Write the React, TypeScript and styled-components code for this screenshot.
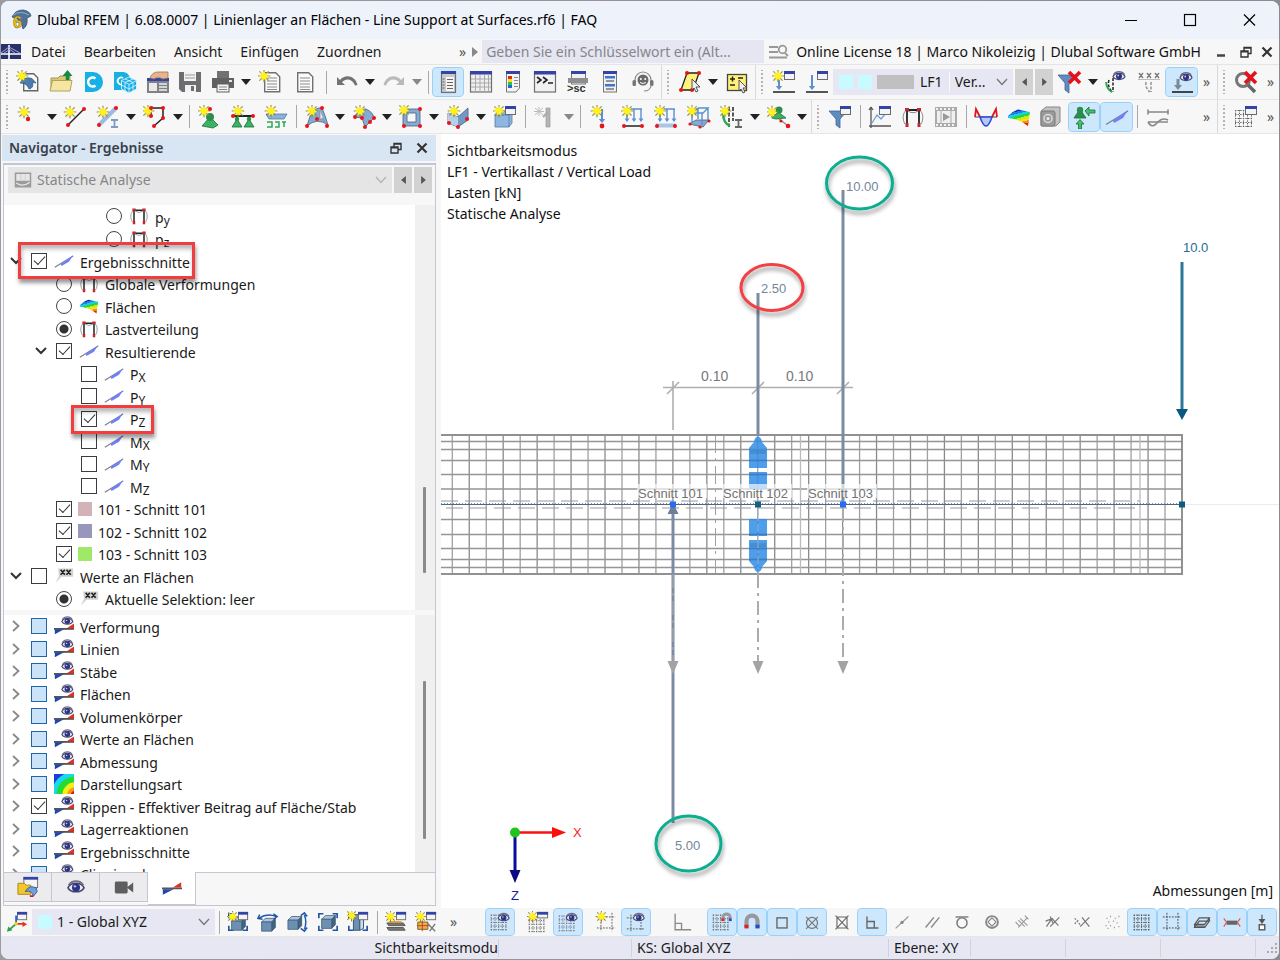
import React, { useId } from "react";
import styled, { createGlobalStyle, css } from "styled-components";

const GlobalStyle = createGlobalStyle`
  *, *::before, *::after { box-sizing: border-box; }
  html, body { margin: 0; padding: 0; }
  body {
    background: linear-gradient(90deg, #9b9ba0, #8a8a90);
    font-family: "Noto Sans", "Open Sans", sans-serif;
    font-size: 14px;
    line-height: 20px;
    color: #1a1a1a;
    overflow: hidden;
  }
  button, select, input { font: inherit; color: inherit; margin: 0; }
  button { border: 0; padding: 0; background: none; }
`;

/* ---------- window frame ---------- */

const Frame = styled.div`
  padding: 1px;
  height: 100vh;
  min-height: 700px;
`;
const Window = styled.div`
  display: flex;
  flex-direction: column;
  height: 100%;
  background: #f7f7f7;
  border-radius: 8px;
  overflow: hidden;
`;
const TitleBar = styled.header`
  display: flex;
  align-items: center;
  flex: none;
  height: 38px;
  padding: 0 13px 0 8px;
  background: #eef2fa;
`;
const Title = styled.h1`
  flex: 1;
  margin: 0 0 0 4px;
  font-size: 14px;
  font-weight: 400;
  white-space: nowrap;
  color: #000;
`;
const WindowButtons = styled.div`
  display: flex;
  gap: 35px;
`;
const PlainButton = styled.button`
  display: inline-flex;
  align-items: center;
  justify-content: center;
  flex: none;
`;

/* ---------- menu ---------- */

const MenuRow = styled.nav`
  display: flex;
  align-items: center;
  flex: none;
  height: 26px;
  padding-right: 6px;
  border-bottom: 1px solid #e4e4e4;
`;
const MenuItems = styled.ul`
  display: flex;
  gap: 18px;
  flex: 1;
  margin: 0;
  padding: 0 0 0 10px;
  list-style: none;
`;
const KeywordInput = styled.input`
  width: 282px;
  height: 23px;
  margin: 0 5px 0 3px;
  padding: 0 4px;
  border: 0;
  background: #e5e6f1;
  &::placeholder { color: #85858c; opacity: 1; }
`;
const License = styled.span`
  margin: 0 15px 0 7px;
  white-space: nowrap;
  color: #111;
`;
const DocButtons = styled.div`
  display: flex;
  gap: 4px;
`;

/* ---------- toolbars ---------- */

const Toolbar = styled.div<{ $h: number }>`
  display: flex;
  align-items: center;
  flex: none;
  height: ${(p) => p.$h}px;
  padding-left: 1px;
  border-bottom: 1px solid #e6e6e6;
`;
const Group = styled.div<{ $w: number }>`
  display: flex;
  align-items: center;
  flex: none;
  width: ${(p) => p.$w}px;
  & > button { flex: 1 1 0; width: auto; min-width: 0; }
`;
const Tool = styled.button<{ $on?: boolean; $small?: boolean }>`
  display: inline-flex;
  align-items: center;
  justify-content: center;
  flex: none;
  width: ${(p) => (p.$small ? 30 : 33)}px;
  height: ${(p) => (p.$small ? 28 : 30)}px;
  border: 1px solid transparent;
  border-radius: 4px;
  background-clip: padding-box;
  ${(p) => p.$on && css`
    background-color: #cde7fd;
    border-color: #99d1fb;
  `}
`;
const CaretButton = styled.button`
  display: inline-flex;
  align-items: center;
  justify-content: center;
  flex: none;
  width: 14px;
  height: 28px;
`;
const Separator = styled.span`
  flex: none;
  width: 8px;
  height: 23px;
  background: linear-gradient(#a8a8a8, #a8a8a8) center / 1px 100% no-repeat;
`;
const Edge = styled.span`
  flex: none;
  align-self: stretch;
  width: 4px;
  background: linear-gradient(#dadada, #dadada) center / 1px 100% no-repeat;
`;
const Grip = styled.span`
  flex: none;
  width: 10px;
  height: 24px;
  background: radial-gradient(circle, #b4b4b4 1px, transparent 1px) center / 4px 4px repeat-y;
`;
const Gap = styled.span<{ $w: number }>`
  flex: none;
  width: ${(p) => p.$w}px;
`;
const Stretch = styled.span`
  flex: 1;
`;
const More = styled.button`
  flex: none;
  width: 17px;
  line-height: 20px;
  color: #555;
`;
const Combo = styled.div<{ $w?: number; $muted?: boolean }>`
  position: relative;
  display: flex;
  align-items: center;
  gap: 5px;
  ${(p) => (p.$w ? `flex: none; width: ${p.$w}px;` : "flex: 1;")}
  min-width: 0;
  height: 26px;
  padding-left: 6px;
  background: ${(p) => (p.$muted ? "#e5e5e5" : "#e6e7f2")};
  color: ${(p) => (p.$muted ? "#85858a" : "#1a1a1a")};
`;
const ComboSelect = styled.select`
  flex: 1;
  min-width: 0;
  height: 100%;
  padding: 0;
  border: 0;
  background: transparent;
  appearance: none;
`;
const ComboArrow = styled.svg`
  position: absolute;
  right: 5px;
  top: 9px;
  pointer-events: none;
`;
const Swatch = styled.span<{ $c: string; $w?: number }>`
  flex: none;
  width: ${(p) => p.$w ?? 14}px;
  height: 14px;
  background: ${(p) => p.$c};
`;
const CaseName = styled.span`
  padding: 0 6px 0 1px;
  border-right: 1px solid #fafafa;
`;
const StepButton = styled.button`
  display: flex;
  align-items: center;
  justify-content: center;
  flex: none;
  width: 18px;
  height: 26px;
  margin-left: 2px;
  background: #d2d2d2;
`;

/* ---------- navigator dock ---------- */

const Main = styled.main`
  display: flex;
  flex: 1;
  min-height: 0;
`;
const Dock = styled.aside`
  display: flex;
  flex-direction: column;
  flex: none;
  width: 440px;
  padding: 1px 5px 2px 1px;
`;
const DockTitle = styled.div`
  display: flex;
  align-items: center;
  gap: 14px;
  flex: none;
  height: 26px;
  margin-bottom: 2px;
  padding: 0 8px 0 7px;
  background: #d8e5f2;
`;
const DockHeading = styled.h2`
  flex: 1;
  margin: 0;
  font-size: 14px;
  font-weight: 600;
  line-height: 20px;
  color: #3a3f4a;
`;
const Panel = styled.div`
  display: flex;
  flex-direction: column;
  flex: 1;
  min-height: 0;
  margin-left: 1px;
  border: 1px solid #c6c6d2;
  border-top-width: 2px;
`;
const AnalysisRow = styled.div`
  display: flex;
  flex: none;
  padding: 2px 3px 12px 4px;
`;
const TreeBox = styled.div<{ $grow?: boolean }>`
  display: flex;
  align-items: flex-start;
  ${(p) => (p.$grow ? "flex: 1; min-height: 0; overflow: hidden;" : "flex: none; margin-bottom: 5px;")}
  background: #fff;
`;
const TreeList = styled.ul<{ $rows: number; $h: number }>`
  display: grid;
  grid-template-rows: repeat(${(p) => p.$rows}, 1fr);
  flex: 1;
  height: ${(p) => p.$h}px;
  margin: 0;
  padding: 0;
  list-style: none;
`;
const ScrollTrack = styled.div<{ $top: number }>`
  align-self: stretch;
  flex: none;
  width: 20px;
  padding: ${(p) => p.$top}px 8px 0;
  background: #f0f0f0;
`;
const ScrollThumb = styled.div<{ $h: number }>`
  width: 3px;
  height: ${(p) => p.$h}px;
  border-radius: 1px;
  background: #8a8a8a;
`;
const Row = styled.li<{ $level: number }>`
  position: relative;
  display: flex;
  align-items: center;
  padding-left: ${(p) => 4 + p.$level * 25}px;
  white-space: nowrap;
`;
const Expander = styled.button`
  display: flex;
  justify-content: center;
  flex: none;
  width: 16px;
  margin-right: 7px;
`;
const ExpanderSpace = styled.span`
  flex: none;
  width: 23px;
`;
const Check = styled.input<{ $mixed?: boolean }>`
  appearance: none;
  flex: none;
  width: 16px;
  height: 16px;
  border: 1px solid ${(p) => (p.$mixed ? "#1e66a8" : "#3c3c3c")};
  background: ${(p) => (p.$mixed ? "#cbe3f8" : "#fff")};
  &:checked::before {
    content: "";
    display: block;
    width: 11px;
    height: 6px;
    margin: 2px 0 0 2px;
    border: solid #333;
    border-width: 0 0 1px 1px;
    transform: rotate(-47deg);
  }
`;
const Radio = styled.input`
  appearance: none;
  flex: none;
  width: 16px;
  height: 16px;
  border: 1px solid #444;
  border-radius: 50%;
  background: #fff;
  &:checked { background: radial-gradient(circle, #333 4px, #fff 5px); }
`;
const IconSlot = styled.span`
  display: flex;
  align-items: center;
  justify-content: center;
  flex: none;
  width: 22px;
  margin: 0 5px 0 6px;
`;
const SwatchSlot = styled(IconSlot)`
  width: 14px;
  margin: 0 6px 0 6px;
`;
const RowLabel = styled.label`
  padding-top: 3px;
  line-height: 18px;
`;
const Index = styled.sub`
  font-size: 12px;
  line-height: 1;
  vertical-align: -2px;
`;
const Highlight = styled.span<{ $x: number; $w: number; $wide?: boolean }>`
  position: absolute;
  z-index: 1;
  left: ${(p) => p.$x}px;
  top: ${(p) => (p.$wide ? -8 : -3)}px;
  bottom: ${(p) => (p.$wide ? -6 : -4)}px;
  width: ${(p) => p.$w}px;
  border: 3px solid #f23d3f;
  box-shadow: 1px 4px 4px rgba(0, 0, 0, 0.4), inset 1px 4px 4px rgba(0, 0, 0, 0.28);
  pointer-events: none;
`;
const Tabs = styled.div`
  display: flex;
  align-items: flex-start;
  flex: none;
  height: 33px;
  background: #f7f7f7;
`;
const Tab = styled.button<{ $active?: boolean }>`
  display: flex;
  align-items: center;
  justify-content: center;
  width: 48px;
  height: ${(p) => (p.$active ? 33 : 30)}px;
  border: 1px solid #c6c6d2;
  border-width: ${(p) => (p.$active ? "0 1px 1px 0" : "1px 1px 1px 0")};
  background: ${(p) => (p.$active ? "#fff" : "#ececee")};
`;
const TabRest = styled.span`
  flex: 1;
  border-top: 1px solid #c6c6d2;
`;

/* ---------- model view ---------- */

const View = styled.section`
  position: relative;
  flex: 1;
  min-width: 0;
  background: #fff;
`;
const Drawing = styled.svg`
  display: block;
  width: 100%;
  height: 100%;
`;
const ViewInfo = styled.div`
  position: absolute;
  left: 6px;
  top: 6px;
  line-height: 21px;
  color: #111;
`;
const ViewUnits = styled.div`
  position: absolute;
  right: 6px;
  bottom: 7px;
  color: #111;
`;

/* ---------- status ---------- */

const StatusBar = styled.footer`
  display: flex;
  align-items: center;
  flex: none;
  height: 22px;
  background: #e6e7f2;
`;
const StatusCell = styled.div<{ $w?: number; $end?: boolean }>`
  ${(p) => (p.$w ? `flex: none; width: ${p.$w}px;` : "flex: 1;")}
  height: 18px;
  padding-left: 5px;
  text-align: ${(p) => (p.$end ? "right" : "left")};
  line-height: 18px;
  border-right: 1px solid #d2d2da;
`;

/* ---------- icon building blocks ---------- */

const Star = ({ x = 6, y = 6 }: { x?: number; y?: number }) => (
  <g transform={`translate(${x} ${y}) scale(1.15)`}>
    <path d="M0-5.5V5.5M-5.5 0H5.5M-4-4L4 4M4-4L-4 4" stroke="#8d8a4c" strokeWidth="1" />
    <path d="M0-4.6L1.3-2 3.8-3 2.6-.6 4.6.6 2.2 1.5 1.8 4.2 0 2.7-2 4.2-2 1.5-4.6.4-2.6-.8-3.6-3.2-1.2-2.2Z" fill="#fff01e" />
  </g>
);
const Dot = ({ x, y, r = 2 }: { x: number; y: number; r?: number }) => <circle cx={x} cy={y} r={r} fill="#e8141c" />;
const Win = ({ x = 12, y = 1, w = 11, h = 9 }: { x?: number; y?: number; w?: number; h?: number }) => (
  <g>
    <rect x={x + 0.5} y={y + 0.5} width={w - 1} height={h - 1} fill="#f4f4f4" stroke="#6b6b6b" />
    <rect x={x} y={y} width={w} height="3" fill="#3443a8" />
  </g>
);
const Eye = ({ x = 16, y = 6, s = 1 }: { x?: number; y?: number; s?: number }) => (
  <g transform={`translate(${x} ${y}) scale(${s})`}>
    <path d="M-6 .6C-4-4 4-4 6 .6 4 4.6-4 4.6-6 .6Z" fill="#e8eaf6" stroke="#45456e" strokeWidth="1.2" />
    <path d="M-5.5-1.4C-3-5.4 3-5.4 5.5-1.4" fill="none" stroke="#6d6d86" strokeWidth="1.3" />
    <circle cy=".3" r="3" fill="#2b3480" />
    <circle cx="-.8" cy="-.5" r=".9" fill="#b9c4ff" />
  </g>
);
const BlueArrow = ({ x, y1, y2 }: { x: number; y1: number; y2: number }) => (
  <g>
    <path d={`M${x} ${y1}V${y2 - 2}`} stroke="#5a8fd0" strokeWidth="2" />
    <path d={`M${x - 3.2} ${y2 - 4}H${x + 3.2}L${x} ${y2}Z`} fill="#5a8fd0" />
  </g>
);
const LoadRow = () => (
  <g>
    <path d="M6 4H21" stroke="#5a8fd0" strokeWidth="1.3" />
    {[6, 13, 20].map((x) => (
      <g key={x}>
        <path d={`M${x} 4V16`} stroke="#5a8fd0" strokeWidth="1.4" />
        <path d={`M${x - 2.4} 13.500H${x + 2.4}L${x} 17Z`} fill="#5a8fd0" />
      </g>
    ))}
  </g>
);
const Sheet = ({ x = 4 }: { x?: number }) => (
  <g>
    <path d={`M${x + 0.7} 2.7h11l4 4v15h-15Z`} fill="#fafafa" stroke="#707070" strokeWidth="1.4" />
    <path d={`M${x + 3} 8h10M${x + 3} 11h10M${x + 3} 14h10M${x + 3} 17h10M${x + 3} 19.5h10`} stroke="#8b8b8b" />
  </g>
);
const DotGrid = ({ x = 2, y = 4, c = "#666" }: { x?: number; y?: number; c?: string }) => (
  <path
    d={[0, 4, 8, 12, 16].map((k) => `M${x} ${y + k + 0.5}h18M${x + k + 0.5} ${y}v18`).join("")}
    stroke={c}
    strokeWidth="1"
    strokeDasharray="1.4 1.2"
    fill="none"
  />
);
const Frame4 = ({ c = "#555" }: { c?: string }) => (
  <path d="M2 6.5h20M2 18.5h20M6.5 2v20M18.5 2v20" stroke={c} strokeDasharray="2 1.3" fill="none" />
);
const Cube = ({ x = 4, y = 6 }: { x?: number; y?: number }) => (
  <g transform={`translate(${x} ${y})`}>
    <path d="M0 4L4 0H15L11 4Z" fill="#a9c4de" stroke="#3b566f" strokeWidth=".8" />
    <path d="M11 4L15 0V10L11 14Z" fill="#3f6485" stroke="#34506d" strokeWidth=".8" />
    <path d="M0 4H11V14H0Z" fill="#6d90b2" stroke="#3b566f" strokeWidth=".8" />
  </g>
);
const Brackets = ({ c = "#1f55a8" }: { c?: string }) => (
  <path d="M2 8V3H7M17 3H22V8M22 16V21H17M7 21H2V16" fill="none" stroke={c} strokeWidth="1.8" />
);
const Portal = () => (
  <g>
    <path d="M6 20V5H18V20" fill="none" stroke="#222" strokeWidth="1.8" />
    <path d="M4 19C1.500 15 1.500 9 4.500 6M20 19C22.500 15 22.500 9 19.500 6M7 6Q12 9.500 17 6" fill="none" stroke="#888" />
    <path d="M4 3h4v3H4ZM16 3h4v3h-4ZM4.500 18h3v4h-3ZM16.500 18h3v4h-3Z" fill="#c8262c" />
  </g>
);
const Surface = () => {
  const id = useId();
  const bands = ["#0d2fae", "#1f7de8", "#18d0e6", "#2ad636", "#c8ea20", "#f8e21c", "#f48a1c", "#e2200e"];
  return (
    <g>
      <linearGradient id={id} x1="0.35" y1="0" x2="0.7" y2="1">
        {bands.flatMap((c, i) => [
          <stop key={`${c}a`} offset={i / 8} stopColor={c} />,
          <stop key={`${c}b`} offset={(i + 1) / 8} stopColor={c} />,
        ])}
      </linearGradient>
      <path d="M1 11Q6 6 11 4.500L23 7L21 21Q12 14 1 13Z" fill={`url(#${id})`} />
    </g>
  );
};
const Support = ({ x, y }: { x: number; y: number }) => (
  <g transform={`translate(${x} ${y})`}>
    <path d="M0 0L5 8H-5Z" fill="#3bb264" stroke="#17703a" strokeWidth=".8" />
    <circle r="2.200" fill="#2b8e4c" />
  </g>
);

const svgIcons = {
  newModel: (
    <>
      <path d="M7.700 3.700h10l4 4v13h-14Z" fill="#fafafa" stroke="#666" strokeWidth="1.400" />
      <path d="M4 13Q8 6 16 8.500L20 13L16.500 12.500Q18 18 13 19Q11 13 4 13Z" fill="#4b7cb0" stroke="#2c5580" strokeWidth=".7" />
      <Star />
    </>
  ),
  open: (
    <>
      <path d="M2 20V8H9L11 6H21V20Z" fill="#d9c678" stroke="#a8964e" />
      <path d="M1 21L3.500 10.500H23L21 21Z" fill="#f4e7a2" stroke="#b3a25c" />
      <path d="M18.500 10V5" stroke="#178a42" strokeWidth="3.400" />
      <path d="M18.500 0L23.500 6H13.500Z" fill="#178a42" />
    </>
  ),
  dlubal: (
    <>
      <path d="M4 2h8a10 10 0 0 1 0 20H4Z" fill="#16b0e4" />
      <path d="M14.500 8.500a4.500 4.500 0 1 0 0 7" fill="none" stroke="#fff" strokeWidth="2.600" />
    </>
  ),
  cloudCube: (
    <>
      <path d="M1 2h9a7 7 0 0 1 7 6L9 12v8H1Z" fill="#16b0e4" />
      <path d="M10 8a3.500 3.500 0 1 0 0 6" fill="none" stroke="#fff" strokeWidth="1.800" />
      <path d="M16 7L23.500 10.500V19L16 23L8.500 19V10.500Z" fill="#16b0e4" stroke="#e8f8ff" strokeWidth=".8" />
      <path d="M8.500 10.500L16 14.500L23.500 10.500M16 14.500V23M8.500 15L16 19L23.500 15M12 9L20 12.500V21M20 9L12 12.500V21" stroke="#e8f8ff" strokeWidth=".8" fill="none" />
    </>
  ),
  manager: (
    <>
      <rect x="1" y="8" width="22" height="15" fill="#7f8184" />
      <rect x="1" y="8" width="22" height="3" fill="#3443a8" />
      <rect x="3" y="13" width="8" height="8" fill="#e9e9e9" />
      <path d="M13 14h8M13 17h8M13 20h8" stroke="#f0f0f0" strokeWidth="1.400" />
      <path d="M4 8Q6 2 12 2H22V8L17 9L12 7L8 9Z" fill="#e7b48c" stroke="#9d7251" strokeWidth=".8" />
    </>
  ),
  save: (
    <>
      <path d="M1 2H23V22H4L1 19Z" fill="#6c6e70" />
      <rect x="6" y="2" width="12" height="9" fill="#f2f2f2" />
      <path d="M7 5h10M7 8h10" stroke="#999" />
      <rect x="7" y="15" width="11" height="7" fill="#f2f2f2" />
      <rect x="13" y="16" width="3" height="5" fill="#6c6e70" />
    </>
  ),
  print: (
    <>
      <rect x="6" y="1" width="12" height="7" fill="#6f7173" />
      <rect x="1" y="8" width="22" height="10" fill="#5f6163" />
      <rect x="6" y="14" width="12" height="8" fill="#f2f2f2" stroke="#5f6163" />
      <path d="M8 17h8M8 19.500h8" stroke="#888" />
      <rect x="18" y="10" width="3" height="2" fill="#e6e6e6" />
    </>
  ),
  report: (<><Sheet x={6} /><Star /></>),
  sheet: <Sheet />,
  undo: <path d="M2 7V15H10L7 12.200C11 8 17 8.500 20 15.500L22.500 15C20 5 10 4 5 10Z" fill="#717375" />,
  redo: <path d="M22 7V15H14L17 12.200C13 8 7 8.500 4 15.500L1.500 15C4 5 14 4 19 10Z" fill="#b9babb" />,
  navigator: (
    <>
      <rect x="5.500" y="2" width="14" height="20.500" fill="#c9c9c9" stroke="#6e7072" strokeWidth="1.200" />
      <rect x="5" y="1" width="15" height="3" fill="#3443a8" />
      <path d="M10 7h8v14h-8Z" fill="#f4f4f4" />
      <path d="M6.500 9h2M6.500 12h2M6.500 15h2M6.500 18h2" stroke="#666" />
      <path d="M11 9.500h6M11 12.500h6M11 15.500h6M11 18.500h6" stroke="#666" />
    </>
  ),
  table: (
    <>
      <rect x="1.500" y="2" width="21" height="20" fill="#efefef" stroke="#6f6f6f" strokeWidth="1.200" />
      <path d="M2 9h20M2 13h20M2 17h20M6.500 5v17M11 5v17M15.500 5v17M19.500 5v17" stroke="#a9a9a9" />
      <rect x="1" y="1" width="22" height="3.500" fill="#3443a8" />
    </>
  ),
  colors: (
    <>
      <path d="M5.500 2H18.500V18L15 22H5.500Z" fill="#f3f3f3" stroke="#777" />
      <rect x="5" y="1" width="14" height="3" fill="#3443a8" />
      <rect x="7" y="6" width="4" height="3" fill="#e8251c" />
      <rect x="7" y="9" width="4" height="3" fill="#f4e21c" />
      <rect x="7" y="12" width="4" height="3" fill="#2ec63c" />
      <rect x="7" y="15" width="4" height="3" fill="#2166e0" />
      <path d="M13 7.500h4M13 10.500h4M13 13.500h4M13 16.500h4" stroke="#888" />
    </>
  ),
  console: (
    <>
      <rect x="1.500" y="2" width="21" height="20" fill="#f1f1f1" stroke="#6f6f6f" strokeWidth="1.200" />
      <rect x="1" y="1" width="22" height="3.500" fill="#3443a8" />
      <path d="M4 7l4 3-4 3M10 7l4 3-4 3M15 13h5" fill="none" stroke="#222" strokeWidth="1.600" />
    </>
  ),
  script: (
    <>
      <rect x="5.500" y="2" width="14" height="12" fill="#f1f1f1" stroke="#777" />
      <rect x="5" y="1" width="15" height="3" fill="#3443a8" />
      <rect x="2" y="8" width="20" height="5" fill="#8b8d8f" />
      <text x="1" y="22" fontSize="11" fontWeight="700" fontFamily="Liberation Sans, sans-serif" fill="#333">&gt;sc</text>
    </>
  ),
  props: (
    <>
      <rect x="5.500" y="2" width="13" height="20" fill="#eee" stroke="#777" />
      <rect x="5" y="1" width="14" height="3" fill="#3443a8" />
      <rect x="7" y="6" width="10" height="2.500" fill="#3c74d0" />
      <rect x="7" y="14" width="10" height="2.500" fill="#3c74d0" />
      <path d="M8 11h8M8 19h8" stroke="#777" strokeWidth="1.400" />
    </>
  ),
  headset: (
    <>
      <circle cx="12" cy="10" r="5.500" fill="#6a6a6a" />
      <path d="M4 12V10a8 8 0 0 1 16 0v2" fill="none" stroke="#8a8a8a" strokeWidth="1.200" />
      <rect x="1.500" y="10" width="3.500" height="6" rx="1.500" fill="#777" />
      <rect x="19" y="10" width="3.500" height="6" rx="1.500" fill="#777" />
      <path d="M20 16Q19 21 13 21" stroke="#888" fill="none" strokeWidth="1.200" />
      <circle cx="9.800" cy="9" r="1" fill="#fff" /><circle cx="14.200" cy="9" r="1" fill="#fff" />
      <path d="M9 12.500Q12 14.500 15 12.500" stroke="#fff" fill="none" />
    </>
  ),
  selectArea: (
    <>
      <path d="M3 20L9 3H21L15 20Z" fill="#fff17a" stroke="#222" strokeWidth="1.300" />
      <Dot x={3} y={20} /><Dot x={9} y={3} /><Dot x={21} y={3} /><Dot x={14} y={20} />
      <path d="M14 9L22 17H18L20 21L18 22L16 18L14 20Z" fill="#eee" stroke="#444" strokeWidth=".9" />
    </>
  ),
  selectSpecial: (
    <>
      <rect x="2.500" y="4.500" width="19" height="16" fill="#fff17a" stroke="#444" strokeWidth="1.300" />
      <path d="M5 9h5M7.500 6.500v5M5 15h5M13 8h5" stroke="#222" strokeWidth="1.500" />
      <path d="M14 10L22 18H18L20 22L18 23L16 19L14 21Z" fill="#eee" stroke="#444" strokeWidth=".9" />
    </>
  ),
  newLoadCase: (<><path d="M1 22h22" stroke="#555" strokeWidth="2" /><BlueArrow x={7} y1={6} y2={20} /><Win /><Star /></>),
  loadCase: (<><path d="M1 22h22" stroke="#555" strokeWidth="2" /><BlueArrow x={7} y1={5} y2={20} /><Win /></>),
  filterOff: (
    <>
      <path d="M0 5H18L11 13V23L7 20V13Z" fill="#5f8cc0" stroke="#3d6798" strokeWidth=".8" />
      <path d="M11 2L22 13M22 2L11 13" stroke="#e3131b" strokeWidth="3.600" />
    </>
  ),
  supportEye: (
    <>
      <path d="M5 10Q3 16 8 22M9 8V22" fill="none" stroke="#222" strokeWidth="1.500" strokeDasharray="3 1.500" />
      <path d="M2 12Q3 20 8 22" fill="none" stroke="#2ea855" strokeWidth="2" />
      <Eye x={15} y={6} />
    </>
  ),
  values: (
    <>
      <path d="M2 3l4 5M6 3L2 8M10 3l4 5M14 3l-4 5M18 3l4 5M22 3l-4 5" stroke="#777" strokeWidth="1.300" />
      <path d="M1 9.500h22" stroke="#bbb" />
      <path d="M9 12Q8 18 13 22M14 12V22" stroke="#999" strokeWidth="1.600" fill="none" strokeDasharray="3 1.500" />
    </>
  ),
  loadEye: (<><path d="M2 22h21" stroke="#444" strokeWidth="2" /><path d="M8 9V18" stroke="#7b8a9a" strokeWidth="3" /><path d="M4 15H12L8 20Z" fill="#7b8a9a" /><Eye x={16} y={7} /></>),
  zoomOff: (
    <>
      <circle cx="9" cy="10" r="6.500" fill="none" stroke="#777" strokeWidth="3" />
      <path d="M14 15L21 22" stroke="#666" strokeWidth="3.500" />
      <path d="M11 2L22 13M22 2L11 13" stroke="#e3131b" strokeWidth="3.600" />
    </>
  ),
  node: (<><Star x={7} y={7} /><Dot x={11} y={14} r={2.200} /></>),
  line: (<><path d="M5 20L21 4" stroke="#222" strokeWidth="1.400" /><Dot x={5} y={20} /><Dot x={21} y={4} /><Star x={7} y={7} /></>),
  member: (
    <>
      <path d="M3 20L20 3" stroke="#9dbbe0" strokeWidth="4" />
      <Dot x={3} y={20} /><Dot x={20} y={3} /><Star x={7} y={7} />
      <path d="M15 15h7M15 22h7M18.500 15v7" stroke="#7d9cc4" strokeWidth="1.800" />
    </>
  ),
  polyline: (<><path d="M8 11V3H20V13L11 21" fill="none" stroke="#222" strokeWidth="1.500" /><Star x={5} y={6} /><Dot x={8} y={11} /><Dot x={8} y={3} /><Dot x={20} y={3} /><Dot x={20} y={13} /><Dot x={11} y={21} /></>),
  nodeSupport: (<><path d="M12 12L20 20L15 23L4 21Z" fill="#3bb264" stroke="#17703a" strokeWidth=".8" /><circle cx="12" cy="12" r="4" fill="#2b8e4c" /><Star x={6} y={6} /><Dot x={12} y={4} /></>),
  lineSupport: (<><path d="M1 11H22" stroke="#222" strokeWidth="1.800" /><Support x={6} y={14} /><Support x={18} y={14} /><Star x={7} y={6} /><Dot x={2} y={11} /><Dot x={22} y={11} /></>),
  surfaceSupport: (<><path d="M2 9H23L20 14H5Z" fill="#8bb2dc" stroke="#55789e" strokeWidth=".8" /><path d="M3 17h5v5H3M11 17h4v5h-4M18 17h4M20 17v5" stroke="#2ea855" strokeWidth="1.500" fill="none" /><Star x={7} y={6} /></>),
  surface: (<><path d="M2 21Q6 6 9 5Q14 2 17 3Q20 10 23 20Q12 12 2 21Z" fill="#86aad2" stroke="#44617f" strokeWidth=".8" /><Star x={7} y={6} /><Dot x={2} y={21} /><Dot x={17} y={3} /><Dot x={12} y={14} /><Dot x={22} y={21} /><path d="M15 6v9l2.500-2 2 4" fill="#eee" stroke="#888" strokeWidth=".8" /></>),
  dome: (<><path d="M2 12Q8 3 14 4Q21 7 22 13L13 22L10 13Z" fill="#86aad2" stroke="#44617f" strokeWidth=".8" /><Star x={8} y={6} /><Dot x={3} y={12} /><Dot x={10} y={13} /><Dot x={22} y={13} /><Dot x={13} y={22} /><Dot x={18} y={17} /></>),
  opening: (<><path d="M4 4H21V21H4ZM8 8V17H17V8Z" fill="#86aad2" stroke="#44617f" strokeWidth=".8" fillRule="evenodd" /><Star x={5} y={5} /><Dot x={5} y={21} /><Dot x={21} y={4} /><Dot x={21} y={21} /></>),
  solid: (<><path d="M2 8L12 12L22 3V15L12 22L2 18Z" fill="#6f9bcb" stroke="#44617f" strokeWidth=".8" /><path d="M2 8L12 12V22L2 18Z" fill="#b7d0ea" /><Star x={8} y={6} /><Dot x={3} y={18} /><Dot x={12} y={22} /><Dot x={21} y={14} /></>),
  block: (<><path d="M2 10L5 6H19V18L16 22H2Z" fill="#8db6e2" stroke="#55789e" strokeWidth=".8" /><path d="M2 10H16V22M16 10L19 6" stroke="#55789e" strokeWidth=".8" fill="none" /><Win x={12} y={1} /><Star x={6} y={6} /></>),
  grayMember: (<><path d="M5 2v9M0 6.500h10M1 3l8 7M9 3l-8 7" stroke="#bbb" /><path d="M12 3H16V22H12Z" fill="#b5b5b5" stroke="#999" strokeWidth=".7" /><path d="M9 12L14 7" stroke="#aaa" strokeWidth="2" /></>),
  nodalLoad: (<><BlueArrow x={14} y1={4} y2={18} /><Dot x={14} y={21} r={2.400} /><Star x={9} y={6} /></>),
  memberLoad: (<><LoadRow /><path d="M2 21H22" stroke="#222" strokeWidth="1.500" /><Dot x={3} y={21} /><Dot x={21} y={21} /><Star x={6} y={6} /></>),
  lineLoad: (<><LoadRow /><path d="M2 20.500H22" stroke="#a8c4e6" strokeWidth="4" /><Dot x={3} y={21} /><Dot x={21} y={21} /><Star x={6} y={6} /></>),
  areaLoad: (<><path d="M2 19L9 15H22L16 22Z" fill="#86aad2" stroke="#44617f" strokeWidth=".8" /><path d="M5 6L12 3H21L16 8H5M5 6V18M15 8V20M21 3V16M11 4V14" fill="none" stroke="#5a8fd0" strokeWidth="1.400" /><Dot x={3} y={19} r={1.600} /><Dot x={22} y={16} r={1.600} /><Dot x={13} y={22} r={1.600} /><Star x={5} y={6} /></>),
  imperfection: (<><path d="M9 2V22M13 2V16" stroke="#222" strokeWidth="1.500" strokeDasharray="4 1.500" /><path d="M3 8Q3 18 10 21" stroke="#2ea855" strokeWidth="2.400" fill="none" /><path d="M15 15h7M15 22h7M18.500 15v7" stroke="#666" strokeWidth="1.800" /><Star x={5} y={6} /></>),
  release: (<><path d="M11 7L19 13L9 14L5 13Z" fill="#3bb264" stroke="#17703a" strokeWidth=".8" /><circle cx="12" cy="5" r="3.500" fill="#2b8e4c" /><path d="M12 14L20 20" stroke="#888" strokeWidth="1.200" /><Dot x={14} y={16} r={1.600} /><Dot x={21} y={21} r={2.300} /><Star x={5} y={7} /></>),
  filterWin: (<><path d="M1 6H19L12 14V23L8 20V14Z" fill="#5f8cc0" stroke="#3d6798" strokeWidth=".8" /><Win x={12} y={1} /></>),
  diagram: (<><path d="M3 2V23M1 21H23M3 2l-2 3M3 2l2 3" stroke="#555" strokeWidth="1.300" fill="none" /><path d="M4 18L9 10L13 14L18 8" fill="none" stroke="#6aa0dc" strokeWidth="1.300" /><Win x={11} y={1} w={12} h={9} /></>),
  portal: <Portal />,
  film: (<><path d="M1 2H23V22H1Z" fill="#aaa" /><path d="M3 6H21V18H3Z" fill="#efefef" /><path d="M2 4h20M2 20h20" stroke="#f3f3f3" strokeWidth="1.800" strokeDasharray="2 2" /><path d="M9 8L16 12L9 16Z" fill="#999" /><path d="M7 6v12M17 6v12" stroke="#aaa" /></>),
  results: (<><path d="M1 12H23" stroke="#444" /><path d="M1 12L2 4L6 12M18 12L22 4L23 12" fill="none" stroke="#e3131b" strokeWidth="1.800" /><path d="M6 12Q12 30 18 12Z" fill="#b9c5f6" stroke="#2b46d8" strokeWidth="1.500" /></>),
  surfaceRes: <Surface />,
  dice: (<><path d="M2 6L7 2H21V17L17 21H2Z" fill="#c2c2c2" stroke="#888" /><rect x="2" y="6" width="14" height="15" rx="2" fill="#9a9a9a" stroke="#7a7a7a" /><circle cx="9" cy="13.500" r="4" fill="none" stroke="#ddd" strokeWidth="1.500" /><circle cx="9" cy="13.500" r="1.500" fill="#eee" /></>),
  reactions: (<><path d="M8 4L14 13H2Z" fill="#2b8e4c" stroke="#17703a" strokeWidth=".8" /><circle cx="8" cy="5" r="3.200" fill="#2b8e4c" /><path d="M13 6L17 2V5H23V8H17V11Z" fill="#44c06c" stroke="#17703a" strokeWidth=".8" /><path d="M8 14.500L12 19H9.500V24H6.500V19H4Z" fill="#44c06c" stroke="#17703a" strokeWidth=".8" /></>),
  section: (<><path d="M1 19.500L23 6" stroke="#7c8090" strokeWidth="1.400" /><path d="M8 15.500L23 5L18 13L9 18Z" fill="#6f80f8" /></>),
  smooth: (<><path d="M2 7H22M2 4.500v5M22 4.500v5M2 17H22" stroke="#888" strokeWidth="1.600" fill="#888" /><path d="M2 17Q6 24 11 18T22 15" fill="none" stroke="#888" strokeWidth="1.600" /></>),
  gridTable: (<><DotGrid x={1} y={5} /><Win x={11} y={1} w={12} h={9} /></>),
  ucs: (<><path d="M11 14V5" stroke="#2a66d8" strokeWidth="2" /><path d="M11 14L4 20" stroke="#2aa04a" strokeWidth="2" /><path d="M11 14H20" stroke="#e3331b" strokeWidth="2" /><path d="M1 22.500l1.500-5.500 4.500 4Z" fill="#2aa04a" /><path d="M23 14.500l-5-3v6Z" fill="#e3331b" /><circle cx="11" cy="14" r="2" fill="#f2d21c" /><Win x={12} y={1} /></>),
  cubeNew: (<><Brackets /><Cube x={5} y={7} /><Win x={12} y={1} /><Star /></>),
  cubeTop: (<><Cube x={5} y={8} /><path d="M2 8Q11 2 21 6M3 4l-2 4 5 1M18 3l4 3-4 3" stroke="#1f55a8" strokeWidth="1.600" fill="none" /></>),
  cubeSide: (<><Cube x={1} y={6} /><path d="M19 4Q22 12 19 20M15 5l4-3 3 4M15 19l4 3 3-4" stroke="#1f55a8" strokeWidth="1.600" fill="none" /></>),
  cubeFrame: (<><Brackets /><Cube x={5} y={5} /></>),
  cubeCut: (<><Brackets /><path d="M7 4H14V21H7Z" fill="#6d90b2" stroke="#34506d" /><path d="M14 8l4-3v14l-4 2Z" fill="#c8dcf0" stroke="#34506d" /><Win x={12} y={1} /><Star x={5} y={5} /></>),
  layer: (<><path d="M2 13H20L22 16H4ZM2 18H20L22 21H4Z" fill="#777" stroke="#555" /><path d="M4 12h14" stroke="#e09a2a" strokeWidth="2" /><Win x={12} y={1} /><Star /></>),
  layer2: (<><path d="M3 12H14V20H3Z" fill="#e9b04a" stroke="#7a5c1c" /><path d="M8 10v12M2 16h14" stroke="#c03a2a" /><path d="M14 14L22 22M22 14l-6 8" stroke="#777" strokeWidth="1.500" /><Win x={12} y={1} /><Star /></>),
  gridEye: (<><DotGrid x={2} y={4} /><Eye x={16} y={7} /></>),
  gridNew: (<><DotGrid x={2} y={6} /><Win x={11} y={1} w={12} h={7} /><Star x={6} y={6} /></>),
  gridEye2: (<><DotGrid x={2} y={5} c="#778" /><Eye x={16} y={7} /></>),
  guideNew: (<><Frame4 /><Star x={7} y={6} /></>),
  guideEye: (<><path d="M2 7.500h8M2 19.500h19M6.500 4v18M17.500 12v10" stroke="#555" strokeDasharray="2 1.300" fill="none" /><Eye x={15} y={7} /></>),
  angle: <path d="M4.500 3V20.500H22M4.500 13.500H11.500V20.500" fill="none" stroke="#8a8a8a" strokeWidth="1.500" />,
  gridMagnet: (<><DotGrid x={2} y={4} /><path d="M13 11V7a4 4 0 0 1 8 0v4" fill="none" stroke="#98989e" strokeWidth="3" /><path d="M11.500 8h3v3h-3Z" fill="#e8251c" /><path d="M19.500 8h3v3h-3Z" fill="#2a50c8" /></>),
  magnet: (<><path d="M6 17V11a6 6 0 0 1 12 0v6" fill="none" stroke="#97979f" strokeWidth="4.500" /><path d="M3.700 15h4.600v4H3.700Z" fill="#d8281c" /><path d="M15.700 15h4.600v4h-4.600Z" fill="#2350c0" /></>),
  snapSquare: <rect x="6.500" y="7.500" width="11" height="11" fill="none" stroke="#666" strokeWidth="1.500" />,
  snapCenter: (<><circle cx="12" cy="13" r="6" fill="none" stroke="#777" strokeWidth="1.300" /><path d="M5.500 6.500L18.500 19.500M18.500 6.500L5.500 19.500" stroke="#777" strokeWidth="1.200" /></>),
  snapCross: <path d="M6.500 6.500H17.500V18.500H6.500ZM5 5L19 20M19 5L5 20" fill="none" stroke="#666" strokeWidth="1.200" />,
  snapPerp: <path d="M6.500 6V18.500H19M6.500 11.500H14.500V18.500" fill="none" stroke="#666" strokeWidth="1.500" />,
  snapNear: (<><path d="M5 19L19 6" stroke="#999" strokeWidth="1.300" /><circle cx="12" cy="12.500" r="1.800" fill="#888" /></>),
  snapParallel: <path d="M5 18L14 7M11 18L20 7" stroke="#888" strokeWidth="1.500" />,
  snapTangent: (<><path d="M5 6.500H19" stroke="#777" strokeWidth="1.500" /><circle cx="12" cy="13" r="5.500" fill="none" stroke="#777" strokeWidth="1.600" /></>),
  snapQuad: (<><circle cx="12" cy="12" r="6.500" fill="none" stroke="#888" strokeWidth="2" /><path d="M12 7.500L16.500 12L12 16.500L7.500 12Z" fill="none" stroke="#888" strokeWidth="1.200" /></>),
  snapA: <path d="M8 18L18 7M10 8L18 16M8 10L15 17M5 12l5 5M15 5l4 4" stroke="#999" strokeWidth="1.200" fill="none" />,
  snapB: <path d="M6 17L12 8M10 17L20 7M12 8L19 16M5 11L13 8M10 6l3 7" stroke="#777" strokeWidth="1.300" fill="none" />,
  snapC: (<><path d="M10 17L20 7M12 7L20 17" stroke="#777" strokeWidth="1.300" /><path d="M4 8L10 15M4 14L9 9" stroke="#777" strokeWidth="1.300" strokeDasharray="2 1.500" /></>),
  snapD: <path d="M6 8h1M10 6h1M15 8h1M19 6h1M8 12h1M13 11h1M17 13h1M5 16h1M10 16h1M14 18h1M19 17h1M7 19h1" stroke="#888" strokeWidth="1.500" />,
  tblGrid: <DotGrid x={3} y={4} c="#444" />,
  tblFrame: <Frame4 c="#444" />,
  layers: <path d="M4 18H15L20 11H9ZM4 14.500H15L20 7.500H9ZM4 14.500v3.500M20 7.500v3.500M6 16.500h9" fill="none" stroke="#555" strokeWidth="1.300" />,
  beamEnds: (<><rect x="6" y="10.500" width="12" height="4.500" fill="#666" /><path d="M3 8l3 4.500L3 17M21 8l-3 4.500 3 4.500" fill="none" stroke="#e3535b" strokeWidth="1.200" /></>),
  nodeDown: (<><path d="M12 4V12M9.500 9.500L12 13L14.500 9.500Z" stroke="#555" fill="#555" strokeWidth="1.300" /><rect x="9" y="15" width="6" height="5.500" fill="#fff" stroke="#555" strokeWidth="1.500" /></>),
  xx: (<><path d="M5 3H23V13H9L2 20L6 12Z" fill="#d2d2d2" /><path d="M8 4.500l5 6M13 4.500L8 10.500M15 4.500l5 6M20 4.500l-5 6" stroke="#222" strokeWidth="2" /></>),
  bar: (<><path d="M0 12.500H24" stroke="#555" strokeWidth="2" /><path d="M1 13.500H14L1 20Z" fill="#2446a8" /><path d="M13 11.500L23 5V11.500Z" fill="#d63424" /></>),
  barEye: (<><path d="M0 15.500H24" stroke="#444" strokeWidth="2" /><path d="M1 16H12L1 22Z" fill="#2446a8" /><path d="M15 15L24 9V15Z" fill="#d63424" /><Eye x={16} y={6} s={1.100} /></>),
  rainbow: (<><rect width="24" height="24" fill="#1d3be0" /><circle cx="25" cy="25" r="28" fill="#18d8ee" /><circle cx="25" cy="25" r="22" fill="#24dc30" /><circle cx="25" cy="25" r="15" fill="#f4ee1c" /><circle cx="25" cy="25" r="9" fill="#f49a1c" /><circle cx="25" cy="25" r="5" fill="#d82010" /></>),
  dataNav: (<><Win x={7} y={1} w={16} h={12} /><path d="M1 8H8L10 10H15V20H1Z" fill="#f4c62a" stroke="#a8821a" /><path d="M9 17Q13 9 21 13L22 17L18 22Q16 15 9 17Z" fill="#6fa0d8" stroke="#3a5f8c" /><path d="M14 21h4v2h-4Z" fill="#e3131b" /></>),
  eye: <Eye x={12} y={12} s={1.600} />,
  camera: (<><rect x="2" y="6" width="14" height="13" rx="1.500" fill="#5e5e60" /><path d="M15 12.500L22 7V18Z" fill="#5e5e60" /></>),
  analysis: (<><rect x="1" y="2" width="22" height="20" fill="#9b9b9b" /><path d="M3 4H21V13H3Z" fill="#e6e6e6" /><path d="M3 16Q12 22 21 15" stroke="#e6e6e6" strokeWidth="1.800" fill="none" /><path d="M9 4v9M15 4v9" stroke="#ccc" /></>),
};
type IconName = keyof typeof svgIcons;

const Icon = ({ name, size = 24 }: { name: IconName; size?: number }) => (
  <svg width={size} height={size} viewBox="0 0 24 24" fill="none" aria-hidden="true">
    {svgIcons[name]}
  </svg>
);

const Caret = ({ muted }: { muted?: boolean }) => (
  <CaretButton type="button" aria-label="Auswahl öffnen">
    <svg width="10" height="6" viewBox="0 0 10 6"><path d="M0 0H10L5 6Z" fill={muted ? "#888" : "#222"} /></svg>
  </CaretButton>
);
const Tools = ({ names, w, on = [], small }: { names: IconName[]; w: number; on?: IconName[]; small?: boolean }) => (
  <Group $w={w}>
    {names.map((n) => (
      <Tool key={n} type="button" aria-label={n} $on={on.includes(n)} $small={small}>
        <Icon name={n} size={small ? 22 : 24} />
      </Tool>
    ))}
  </Group>
);
const One = ({ name, on, small }: { name: IconName; on?: boolean; small?: boolean }) => (
  <Tool type="button" aria-label={name} $on={on} $small={small}>
    <Icon name={name} size={small ? 22 : 24} />
  </Tool>
);
const Arrow = ({ muted }: { muted?: boolean }) => (
  <ComboArrow width="12" height="8" viewBox="0 0 12 8">
    <path d="M1 1L6 6.500L11 1" fill="none" stroke={muted ? "#b4b4b8" : "#777"} strokeWidth="1.300" />
  </ComboArrow>
);
const Steps = () => (
  <>
    <StepButton type="button" aria-label="Zurück"><svg width="5" height="8" viewBox="0 0 6 10"><path d="M6 0V10L0 5Z" fill="#555" /></svg></StepButton>
    <StepButton type="button" aria-label="Weiter"><svg width="5" height="8" viewBox="0 0 6 10"><path d="M0 0V10L6 5Z" fill="#555" /></svg></StepButton>
  </>
);
const RestoreGlyph = () => (
  <svg width="12" height="12" viewBox="0 0 12 12" fill="none" stroke="#333" strokeWidth="1.400">
    <path d="M1 5H8V11H1ZM1 5.700H8M4 5V1.500H11V7.500H8M4 2H11" />
  </svg>
);
const CloseGlyph = () => (
  <svg width="12" height="12" viewBox="0 0 12 12"><path d="M1.500 1.500L10.500 10.500M10.500 1.500L1.500 10.500" stroke="#333" strokeWidth="2.200" /></svg>
);

/* ---------- tree data ---------- */

type Node = {
  level: number;
  kind: "check" | "radio";
  on?: boolean;
  mixed?: boolean;
  expand?: "open" | "closed";
  icon?: IconName;
  color?: string;
  text: string;
  sub?: string;
  mark?: { x: number; w: number; wide?: boolean };
  group?: string;
};

const resultNodes: Node[] = [
  { level: 3, kind: "radio", icon: "portal", text: "p", sub: "y", group: "p" },
  { level: 3, kind: "radio", icon: "portal", text: "p", sub: "z", group: "p" },
  { level: 0, kind: "check", on: true, expand: "open", icon: "section", text: "Ergebnisschnitte", mark: { x: 14, w: 177, wide: true } },
  { level: 1, kind: "radio", icon: "portal", text: "Globale Verformungen", group: "schnitt" },
  { level: 1, kind: "radio", icon: "surfaceRes", text: "Flächen", group: "schnitt" },
  { level: 1, kind: "radio", on: true, icon: "portal", text: "Lastverteilung", group: "schnitt" },
  { level: 1, kind: "check", on: true, expand: "open", icon: "section", text: "Resultierende" },
  { level: 2, kind: "check", icon: "section", text: "P", sub: "X" },
  { level: 2, kind: "check", icon: "section", text: "P", sub: "Y" },
  { level: 2, kind: "check", on: true, icon: "section", text: "P", sub: "Z", mark: { x: 67, w: 83 } },
  { level: 2, kind: "check", icon: "section", text: "M", sub: "X" },
  { level: 2, kind: "check", icon: "section", text: "M", sub: "Y" },
  { level: 2, kind: "check", icon: "section", text: "M", sub: "Z" },
  { level: 1, kind: "check", on: true, color: "#d2b4b8", text: "101 - Schnitt 101" },
  { level: 1, kind: "check", on: true, color: "#9896ba", text: "102 - Schnitt 102" },
  { level: 1, kind: "check", on: true, color: "#a0e868", text: "103 - Schnitt 103" },
  { level: 0, kind: "check", expand: "open", icon: "xx", text: "Werte an Flächen" },
  { level: 1, kind: "radio", on: true, icon: "xx", text: "Aktuelle Selektion: leer", group: "werte" },
];

const displayNodes: Node[] = [
  "Verformung", "Linien", "Stäbe", "Flächen", "Volumenkörper", "Werte an Flächen", "Abmessung",
  "Darstellungsart", "Rippen - Effektiver Beitrag auf Fläche/Stab", "Lagerreaktionen", "Ergebnisschnitte", "Clippingebene",
].map((text, i) => ({
  level: 0,
  kind: "check",
  expand: "closed",
  on: i === 8,
  mixed: i !== 8,
  icon: i === 7 ? "rainbow" : "barEye",
  text,
}));

const TreeRow = ({ node }: { node: Node }) => {
  const id = useId();
  return (
    <Row $level={node.level}>
      {node.expand ? (
        <Expander type="button" aria-label={node.text}>
          {node.expand === "open" ? (
            <svg width="12" height="8" viewBox="0 0 12 8"><path d="M1 1L6 6L11 1" fill="none" stroke="#333" strokeWidth="2" /></svg>
          ) : (
            <svg width="8" height="12" viewBox="0 0 8 12"><path d="M1 1L6.500 6L1 11" fill="none" stroke="#888" strokeWidth="1.800" /></svg>
          )}
        </Expander>
      ) : (
        <ExpanderSpace />
      )}
      {node.kind === "check" ? (
        <Check id={id} type="checkbox" defaultChecked={node.on} $mixed={node.mixed} />
      ) : (
        <Radio id={id} type="radio" name={node.group} defaultChecked={node.on} />
      )}
      {node.color ? (
        <SwatchSlot><Swatch $c={node.color} /></SwatchSlot>
      ) : (
        <IconSlot><Icon name={node.icon as IconName} size={20} /></IconSlot>
      )}
      <RowLabel htmlFor={id}>
        {node.text}
        {node.sub && <Index>{node.sub}</Index>}
      </RowLabel>
      {node.mark && <Highlight $x={node.mark.x} $w={node.mark.w} $wide={node.mark.wide} />}
    </Row>
  );
};

/* ---------- model drawing ---------- */

const meshX = Array.from({ length: 44 }, (_, k) => 1182 - 16.97 * k).filter((x) => x > 441);
const meshY = [441.5, 449.5, 460.5, 474.5, 489, 519.5, 534.5, 548.5, 559.5, 567.5];
const sectionX = [673, 758, 843];

const Model = () => (
  <Drawing viewBox="441 134 838 774" preserveAspectRatio="xMinYMin slice" fontFamily="Liberation Sans, sans-serif" fontSize="13">
    <defs>
      <filter id="soft" x="-20%" y="-20%" width="140%" height="150%">
        <feDropShadow dx="1" dy="4" stdDeviation="2" floodColor="#000" floodOpacity="0.4" />
      </filter>
    </defs>
    <path d="M1182 504.500H1280" stroke="#ececec" />
    <g strokeWidth="1.300" fill="none">
      {meshX.map((x, i) => <path key={x} d={`M${x} 435V574`} stroke={i % 2 ? "#a0a0a0" : "#8a8a8a"} />)}
      {meshY.map((y) => <path key={y} d={`M441 ${y}H1182`} stroke="#959595" />)}
      <path d="M800.500 435V574M1140 435V574" stroke="#bcbcbc" />
      <path d="M715.500 435V574" stroke="#a0a0a0" strokeDasharray="18 5 3 5" strokeWidth="1" />
      <path d="M441 435H1182V574H441" stroke="#919191" strokeWidth="2" />
    </g>
    <path d="M441 501H1140M446 508H1140" stroke="#9a9a9a" strokeDasharray="17 7" />
    <path d="M441 504.500H1182" stroke="#5b6472" strokeWidth="1.200" />
    <path d="M441 503.500H1182" stroke="#5f9be4" strokeWidth="1" strokeDasharray="1 2" />

    <g fill="#2f8de8" fillOpacity="0.85">
      <path d="M758 436.500Q761.500 437 762 442L767 448V468H749V448L754 442Q754.500 437 758 436.500Z" />
      <path d="M749 472H767V489H749Z" />
      <path d="M749 519H767V536H749Z" />
      <path d="M749 540H767V561L762 567Q761.500 571.500 758 572Q754.500 571.500 754 567L749 561Z" />
    </g>
    <g stroke="#3f6c9c" strokeOpacity="0.5">
      <path d="M749 460.500H767M749 474.500H767M749 534.500H767M749 548.500H767M749 559.500H767" strokeWidth="1.500" />
      <path d="M750 452H766M750 545H766" strokeWidth="4" strokeOpacity="0.35" />
    </g>

    <g stroke="#aeaeb0" strokeWidth="1.600">
      <path d="M663 387.500H853M673 381V430" />
      {sectionX.map((x) => <path key={x} d={`M${x - 6} 394L${x + 6} 382`} />)}
    </g>
    <g fill="#77787b" fontSize="14">
      <text x="701" y="381">0.10</text>
      <text x="786" y="381">0.10</text>
    </g>

    <g stroke="#7a8ca4" strokeWidth="3">
      <path d="M758 293V436M843 190V503M673 512V823" />
    </g>
    <path d="M673 503L678.500 514H667.500Z" fill="#6b8098" />
    <g stroke="#acacae" strokeWidth="2" strokeDasharray="14 5 3 5">
      <path d="M673 574V662" strokeWidth="1" />
      <path d="M758 574V662M843 508V662" />
    </g>
    <path d="M758 508V574" stroke="#8fb4da" strokeDasharray="8 3 2 3" />
    {sectionX.map((x) => <path key={x} d={`M${x - 5.5} 661H${x + 5.5}L${x} 674Z`} fill="#a3a3a5" />)}

    {sectionX.map((x, i) => (
      <g key={x}>
        <rect x={x - 36} y="484" width="70" height="14" fill="#fff" fillOpacity="0.65" />
        <text x={x - 35} y="498" fill="#717274">{`Schnitt 10${i + 1}`}</text>
      </g>
    ))}
    <rect x="670" y="501.500" width="6" height="6" fill="#2a6cf0" />
    <rect x="755" y="501.500" width="6" height="6" fill="#12627e" />
    <rect x="840" y="501.500" width="6" height="6" fill="#2a6cf0" />
    <rect x="1179" y="501.500" width="6" height="6" fill="#0c5c80" />

    <path d="M1182 262V412" stroke="#2b7798" strokeWidth="3" />
    <path d="M1176 409H1188L1182 420Z" fill="#0a5880" />
    <text x="1183" y="252" fill="#1d6e92">10.0</text>
    <g fill="#74869c">
      <text x="846" y="191">10.00</text>
      <text x="761" y="293">2.50</text>
      <text x="675" y="850">5.00</text>
    </g>

    <g fill="none" strokeWidth="3" filter="url(#soft)">
      <ellipse cx="859.500" cy="183" rx="33" ry="26" stroke="#0fae90" />
      <ellipse cx="772" cy="287.500" rx="31" ry="23" stroke="#f04345" />
      <ellipse cx="688.500" cy="843.500" rx="32.500" ry="27.500" stroke="#0fae90" />
    </g>

    <path d="M515 832.500H554" stroke="#fb0f0f" strokeWidth="2.500" />
    <path d="M552 827L566 832.500L552 838Z" fill="#fb0f0f" />
    <path d="M515 833V872" stroke="#0a0a9c" strokeWidth="3" />
    <path d="M509.500 870H520.500L515 883Z" fill="#0a0a82" />
    <circle cx="515" cy="832.500" r="5" fill="#1fc41c" />
    <text x="573" y="837" fill="#fb1a1a">X</text>
    <text x="511" y="900" fill="#1a1aa0">Z</text>
  </Drawing>
);

export default function App() {
  return (
    <Frame>
      <GlobalStyle />
      <Window>
        <TitleBar>
          <svg width="24" height="24" viewBox="0 0 24 24" aria-hidden="true">
            <path d="M3 9Q6 2 14 2Q21 3 22 8L18 10Q19 18 14 21Q12 10 3 9Z" fill="#4f7396" stroke="#345270" strokeWidth=".8" />
            <path d="M4 7Q11 2 20 7" stroke="#8fb0cc" fill="none" />
            <text x="4" y="20" fontSize="16" fontWeight="700" fontFamily="Liberation Sans, sans-serif" fill="#f8c81c" stroke="#6b5410" strokeWidth=".5">6</text>
          </svg>
          <Title>Dlubal RFEM | 6.08.0007 | Linienlager an Flächen - Line Support at Surfaces.rf6 | FAQ</Title>
          <WindowButtons>
            <PlainButton type="button" aria-label="Minimieren"><svg width="24" height="14" viewBox="0 0 24 14"><path d="M1 7.500H13" stroke="#000" /></svg></PlainButton>
            <PlainButton type="button" aria-label="Maximieren"><svg width="24" height="14" viewBox="0 0 24 14"><rect x="1.500" y="1.500" width="11" height="11" fill="none" stroke="#000" strokeWidth="1.200" /></svg></PlainButton>
            <PlainButton type="button" aria-label="Schließen"><svg width="24" height="14" viewBox="0 0 24 14"><path d="M2 1.500L13 12.500M13 1.500L2 12.500" stroke="#000" strokeWidth="1.200" /></svg></PlainButton>
          </WindowButtons>
        </TitleBar>

        <MenuRow>
          <svg width="20" height="16" viewBox="0 0 20 16" aria-hidden="true">
            <rect width="20" height="15" fill="#28306e" />
            <path d="M0 10H20M8 1V15" stroke="#fff" strokeWidth="1.600" />
            <path d="M8 3L0 9M8 3L19 9M8 6L3 9M8 5L14 9" stroke="#9ea4d0" fill="none" />
          </svg>
          <MenuItems>
            {["Datei", "Bearbeiten", "Ansicht", "Einfügen", "Zuordnen"].map((m) => <li key={m}>{m}</li>)}
          </MenuItems>
          <More type="button">»</More>
          <svg width="8" height="10" viewBox="0 0 8 10" aria-hidden="true"><path d="M1 0V10L7 5Z" fill="#888" /></svg>
          <KeywordInput aria-label="Schlüsselwort" placeholder="Geben Sie ein Schlüsselwort ein (Alt..." />
          <svg width="20" height="16" viewBox="0 0 20 16" fill="none" stroke="#999" strokeWidth="1.800" aria-hidden="true">
            <path d="M0 3H9M0 8H9M0 13.500H18M16 9L19 12" /><circle cx="13.500" cy="5.500" r="3.800" />
          </svg>
          <License>Online License 18 | Marco Nikoleizig | Dlubal Software GmbH</License>
          <DocButtons>
            <PlainButton type="button" aria-label="Dokument minimieren"><svg width="12" height="12" viewBox="0 0 12 12"><path d="M1 9.500H9" stroke="#444" strokeWidth="2.400" /></svg></PlainButton>
            <Gap $w={4} />
            <PlainButton type="button" aria-label="Dokument wiederherstellen"><RestoreGlyph /></PlainButton>
            <Gap $w={1} />
            <PlainButton type="button" aria-label="Dokument schließen"><CloseGlyph /></PlainButton>
          </DocButtons>
        </MenuRow>

        <Toolbar $h={35}>
          <Grip />
          <Tools w={227} names={["newModel", "open", "dlubal", "cloudCube", "manager", "save", "print"]} />
          <Caret />
          <Tools w={69} names={["report", "sheet"]} />
          <Separator />
          <One name="undo" /><Caret /><One name="redo" /><Caret muted />
          <Separator />
          <Tools w={227} on={["navigator"]} names={["navigator", "table", "colors", "console", "script", "props", "headset"]} />
          <Edge /><Grip />
          <One name="selectArea" /><Caret /><One name="selectSpecial" />
          <Edge /><Grip />
          <Tools w={66} names={["newLoadCase", "loadCase"]} />
          <Combo>
            <Swatch $c="#c8fbff" /><Swatch $c="#c8fbff" /><Swatch $c="#c0c0c0" $w={37} />
            <CaseName>LF1</CaseName>
            <ComboSelect aria-label="Lastfall"><option>Ver...</option></ComboSelect>
            <Arrow />
          </Combo>
          <Steps />
          <One name="filterOff" /><Caret />
          <Tools w={98} on={["loadEye"]} names={["supportEye", "values", "loadEye"]} />
          <More type="button">»</More>
          <Edge /><Grip />
          <One name="zoomOff" />
          <More type="button">»</More>
        </Toolbar>

        <Toolbar $h={34}>
          <Grip />
          <One name="node" /><Caret />
          <Tools w={65} names={["line", "member"]} /><Caret />
          <One name="polyline" /><Caret />
          <Separator />
          <Tools w={99} names={["nodeSupport", "lineSupport", "surfaceSupport"]} />
          <Separator />
          <One name="surface" /><Caret />
          <One name="dome" /><Caret />
          <One name="opening" /><Caret />
          <One name="solid" /><Caret />
          <One name="block" />
          <Separator />
          <One name="grayMember" /><Caret muted />
          <Separator />
          <Tools w={164} names={["nodalLoad", "memberLoad", "lineLoad", "areaLoad", "imperfection"]} /><Caret />
          <One name="release" /><Caret />
          <Edge /><Grip />
          <One name="filterWin" />
          <Separator />
          <Tools w={98} names={["diagram", "portal", "film"]} />
          <Separator />
          <Tools w={163} on={["reactions", "section"]} names={["results", "surfaceRes", "dice", "reactions", "section"]} />
          <Separator />
          <One name="smooth" />
          <Stretch />
          <More type="button">»</More>
          <Edge /><Grip />
          <One name="gridTable" />
          <More type="button">»</More>
        </Toolbar>

        <Main>
          <Dock>
            <DockTitle>
              <DockHeading>Navigator - Ergebnisse</DockHeading>
              <PlainButton type="button" aria-label="Navigator lösen"><RestoreGlyph /></PlainButton>
              <PlainButton type="button" aria-label="Navigator schließen"><CloseGlyph /></PlainButton>
            </DockTitle>
            <Panel>
              <AnalysisRow>
                <Combo $muted>
                  <Icon name="analysis" size={18} />
                  <ComboSelect aria-label="Analyse"><option>Statische Analyse</option></ComboSelect>
                  <Arrow muted />
                </Combo>
                <Steps />
              </AnalysisRow>
              <TreeBox>
                <TreeList $rows={18} $h={405}>
                  {resultNodes.map((n, i) => <TreeRow key={i} node={n} />)}
                </TreeList>
                <ScrollTrack $top={282}><ScrollThumb $h={86} /></ScrollTrack>
              </TreeBox>
              <TreeBox $grow>
                <TreeList $rows={12} $h={270}>
                  {displayNodes.map((n, i) => <TreeRow key={i} node={n} />)}
                </TreeList>
                <ScrollTrack $top={66}><ScrollThumb $h={158} /></ScrollTrack>
              </TreeBox>
              <Tabs>
                <Tab type="button" aria-label="Daten"><Icon name="dataNav" size={22} /></Tab>
                <Tab type="button" aria-label="Zeigen"><Icon name="eye" size={20} /></Tab>
                <Tab type="button" aria-label="Ansichten"><Icon name="camera" size={22} /></Tab>
                <Tab type="button" aria-label="Ergebnisse" $active><Icon name="bar" size={20} /></Tab>
                <TabRest />
              </Tabs>
            </Panel>
          </Dock>
          <View>
            <Model />
            <ViewInfo>
              <div>Sichtbarkeitsmodus</div>
              <div>LF1 - Vertikallast / Vertical Load</div>
              <div>Lasten [kN]</div>
              <div>Statische Analyse</div>
            </ViewInfo>
            <ViewUnits>Abmessungen [m]</ViewUnits>
          </View>
        </Main>

        <Toolbar $h={29}>
          <One small name="ucs" />
          <Combo $w={183}>
            <Swatch $c="#c8fbff" />
            <ComboSelect aria-label="Koordinatensystem"><option>1 - Global XYZ</option></ComboSelect>
            <Arrow />
          </Combo>
          <Separator />
          <Tools small w={150} names={["cubeNew", "cubeTop", "cubeSide", "cubeFrame", "cubeCut"]} />
          <Separator />
          <Tools small w={60} names={["layer", "layer2"]} />
          <Gap $w={4} />
          <More type="button">»</More>
          <Gap $w={23} />
          <One small name="gridEye" on />
          <Gap $w={8} />
          <One small name="gridNew" /><One small name="gridEye2" on />
          <Gap $w={8} />
          <One small name="guideNew" /><One small name="guideEye" on />
          <Gap $w={16} />
          <One small name="angle" />
          <Stretch />
          <Tools
            small
            w={570}
            on={["gridMagnet", "magnet", "snapSquare", "snapCenter", "snapPerp", "tblGrid", "tblFrame", "layers", "beamEnds", "nodeDown"]}
            names={["gridMagnet", "magnet", "snapSquare", "snapCenter", "snapCross", "snapPerp", "snapNear", "snapParallel", "snapTangent", "snapQuad", "snapA", "snapB", "snapC", "snapD", "tblGrid", "tblFrame", "layers", "beamEnds", "nodeDown"]}
          />
          <Gap $w={2} />
        </Toolbar>

        <StatusBar>
          <StatusCell $end>Sichtbarkeitsmodu</StatusCell>
          <StatusCell $w={133} />
          <StatusCell $w={257}>KS: Global XYZ</StatusCell>
          <StatusCell $w={82}>Ebene: XY</StatusCell>
          <StatusCell $w={95} />
          <StatusCell $w={95} />
          <StatusCell $w={95} />
          <Gap $w={10} />
          <svg width="13" height="16" viewBox="0 0 13 16" aria-hidden="true">
            <path d="M9 4h2M9 8h2M9 12h2M5 8h2M5 12h2M1 12h2" stroke="#aaa" strokeWidth="2" />
          </svg>
        </StatusBar>
      </Window>
    </Frame>
  );
}
